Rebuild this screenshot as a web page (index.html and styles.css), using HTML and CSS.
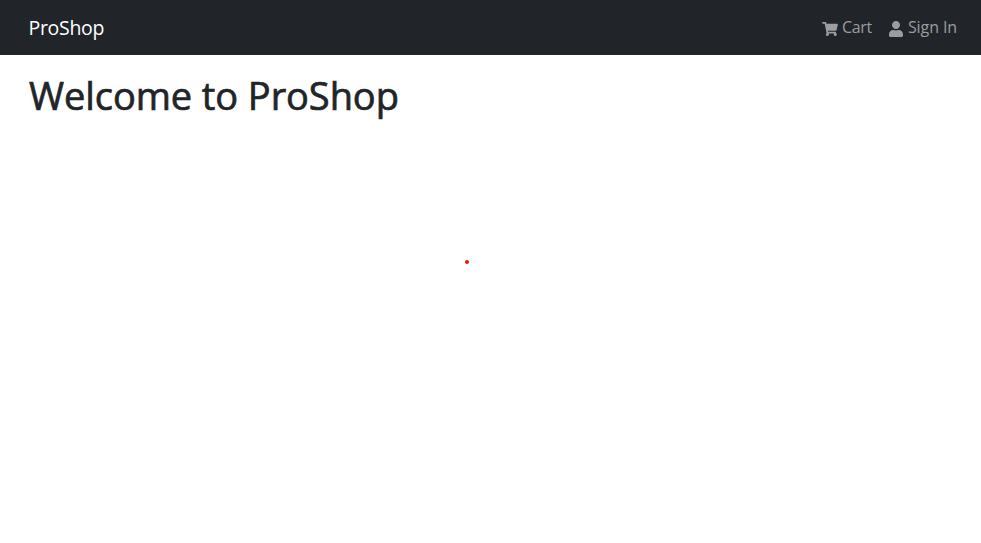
FILE: index.html
```html
<!DOCTYPE html>
<html lang="en">
<head>
<meta charset="utf-8">
<title>ProShop</title>
<link rel="stylesheet" href="styles.css">
</head>
<body>
<header class="navbar">
  <a class="brand"><span class="brand-text">ProShop</span></a>
  <nav class="links">
    <a class="link"><svg class="icon cart" viewBox="0 0 576 512"><path d="M528.12 301.319l47.273-208C578.806 78.301 567.391 64 551.99 64H159.208l-9.166-44.81C147.758 8.021 137.93 0 126.529 0H24C10.745 0 0 10.745 0 24v16c0 13.255 10.745 24 24 24h69.883l70.248 343.435C147.325 417.1 136 435.222 136 456c0 30.928 25.072 56 56 56s56-25.072 56-56c0-15.674-6.447-29.835-16.824-40h209.647C430.447 426.165 424 440.326 424 456c0 30.928 25.072 56 56 56s56-25.072 56-56c0-22.172-12.888-41.332-31.579-50.405l5.517-24.276c3.413-15.018-8.002-29.319-23.403-29.319H218.117l-6.545-32h293.145c11.206 0 20.92-7.754 23.403-18.681z"/></svg><span class="cart-text">Cart</span></a>
    <a class="link"><svg class="icon user" viewBox="0 0 448 512"><path d="M224 256c70.7 0 128-57.3 128-128S294.7 0 224 0 96 57.3 96 128s57.3 128 128 128zm89.6 32h-16.7c-22.2 10.2-46.9 16-72.9 16s-50.6-5.8-72.9-16h-16.7C60.2 288 0 348.2 0 422.4V464c0 26.5 21.5 48 48 48h352c26.5 0 48-21.5 48-48v-41.6c0-74.2-60.2-134.4-134.4-134.4z"/></svg><span class="sign-text">Sign In</span></a>
  </nav>
</header>
<main class="content">
  <h1 class="title">Welcome to ProShop</h1>
  <div class="loader"><span class="dot"></span></div>
</main>
</body>
</html>
```
FILE: styles.css
```css
* { box-sizing: border-box; }
body {
  margin: 0;
  font-family: "Segoe UI", "Open Sans", "Noto Sans", sans-serif;
  color: #212529;
  background: #fff;
}
.navbar {
  display: flex;
  justify-content: space-between;
  align-items: center;
  height: 55px;
  padding: 0 24px 0 28.5px;
  background: #212529;
}
.brand { color: #fff; font-size: 19.5px; line-height: 30px; letter-spacing: -0.3px; }
.links { display: flex; gap: 17px; }
.link { display: flex; align-items: center; color: #9b9d9f; font-size: 16px; line-height: 24px; }
.cart-text, .sign-text { margin-top: -1px; }
.cart-text { letter-spacing: -0.3px; }
.sign-text { letter-spacing: -0.1px; }
.icon { fill: currentColor; margin-top: 2px; }
.cart { width: 16px; height: 14px; margin-right: 4px; }
.user { width: 14px; height: 16px; margin-right: 5px; }
.content { padding: 16px 29px 0; }
.title {
  margin: 0;
  font-size: 38px;
  line-height: 48px;
  font-weight: 500;
  letter-spacing: -0.08px;
  white-space: nowrap;
  -webkit-text-stroke: 0.7px #212529;
}
.loader { display: flex; padding: 141px 0 0 436px; }
.dot { width: 4px; height: 4px; border-radius: 50%; background: #ec1010; }
```
